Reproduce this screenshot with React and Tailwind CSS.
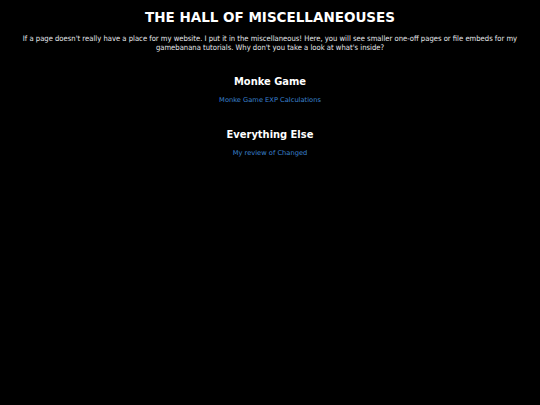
import React from 'react';

const sections = [
  { title: 'Monke Game', links: ['Monke Game EXP Calculations'] },
  { title: 'Everything Else', links: ['My review of Changed'] },
];

export default function App() {
  return (
    <div className="min-h-screen bg-black text-white text-center font-['DejaVu_Sans_Condensed','DejaVu_Sans',sans-serif]">
      <div className="px-[20px] pt-[8px]">
        <h1 className="text-[13.5px] font-bold leading-[18px] font-['DejaVu_Sans',sans-serif]">
          THE HALL OF MISCELLANEOUSES
        </h1>
        <p className="mt-[9px] text-[7.6px] leading-[8.5px] text-gray-200">
          If a page doesn't really have a place for my website. I put it in the miscellaneous! Here, you will see smaller one-off pages or file embeds for my gamebanana tutorials. Why don't you take a look at what's inside?
        </p>

        {sections.map((s) => (
          <div key={s.title} className="mt-[22px]">
            <h2 className="text-[11px] font-bold leading-[16px]">{s.title}</h2>
            <div className="mt-[6px] flex flex-col items-center">
              {s.links.map((l) => (
                <a
                  key={l}
                  href="#"
                  className="text-[6.7px] leading-[9px] text-[#3a82d0] font-['DejaVu_Sans',sans-serif]"
                >
                  {l}
                </a>
              ))}
            </div>
          </div>
        ))}
      </div>
    </div>
  );
}
